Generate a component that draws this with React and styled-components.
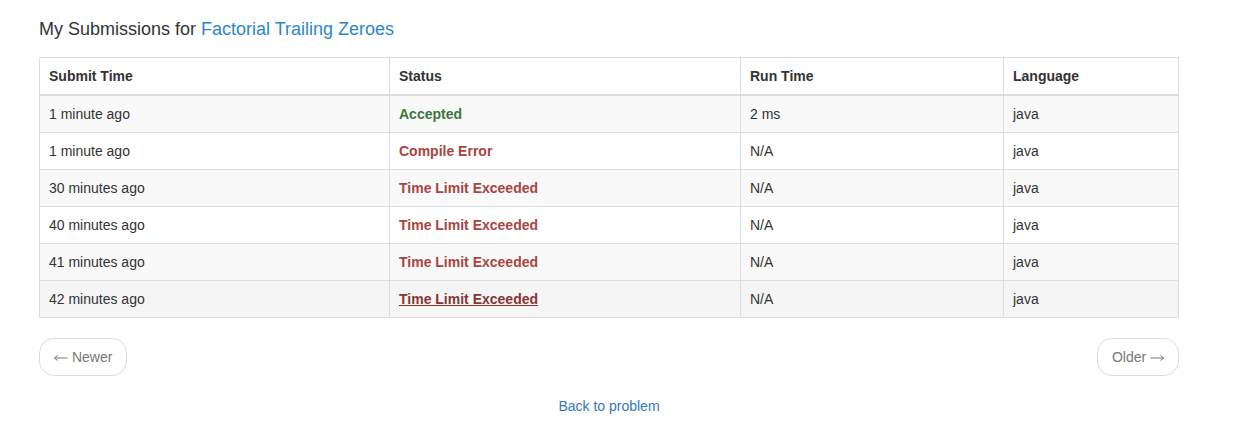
import styled, { createGlobalStyle } from "styled-components"

const GlobalStyle = createGlobalStyle`
  body {
    margin: 0;
    background: #fff;
    font-family: "Liberation Sans", Arial, sans-serif;
    font-size: 14px;
    line-height: 20px;
    color: #333;
  }
`

const rows = [
  { time: "1 minute ago", status: "Accepted", ok: true, run: "2 ms", lang: "java" },
  { time: "1 minute ago", status: "Compile Error", run: "N/A", lang: "java" },
  { time: "30 minutes ago", status: "Time Limit Exceeded", run: "N/A", lang: "java" },
  { time: "40 minutes ago", status: "Time Limit Exceeded", run: "N/A", lang: "java" },
  { time: "41 minutes ago", status: "Time Limit Exceeded", run: "N/A", lang: "java" },
  { time: "42 minutes ago", status: "Time Limit Exceeded", run: "N/A", lang: "java", hover: true },
]

const ArrowIcon = ({ flip }) => (
  <Arrow width="14" height="8" viewBox="0 0 14 8" $flip={flip}>
    <path d="M0.5 4H13.5M0.5 4L3.5 1.5M0.5 4L3.5 6.5" stroke="#777" strokeWidth="1" fill="none" />
  </Arrow>
)

const App = () => {
  return (
    <Page>
      <GlobalStyle />
      <Title>
        My Submissions for <TitleLink href="#">Factorial Trailing Zeroes</TitleLink>
      </Title>
      <Table>
        <colgroup>
          <col style={{ width: 350 }} />
          <col style={{ width: 351 }} />
          <col style={{ width: 263 }} />
          <col />
        </colgroup>
        <thead>
          <tr>
            <Th>Submit Time</Th>
            <Th>Status</Th>
            <Th>Run Time</Th>
            <Th>Language</Th>
          </tr>
        </thead>
        <tbody>
          {rows.map((r, i) => (
            <Row key={i} $odd={i % 2 === 0} $hover={r.hover}>
              <Td>{r.time}</Td>
              <Td>
                <Status href="#" $ok={r.ok} $hover={r.hover}>{r.status}</Status>
              </Td>
              <Td>{r.run}</Td>
              <Td>{r.lang}</Td>
            </Row>
          ))}
        </tbody>
      </Table>
      <Pager>
        <PagerButton href="#"><ArrowIcon /> Newer</PagerButton>
        <PagerButton href="#">Older <ArrowIcon flip /></PagerButton>
      </Pager>
      <Back>
        <BackLink href="#">Back to problem</BackLink>
      </Back>
    </Page>
  )
}

export default App

const Page = styled.div`
  width: 1140px;
  padding: 18px 0 0 39px;
`

const Title = styled.h3`
  margin: 0 0 17px;
  font-size: 18px;
  font-weight: 400;
  line-height: 22px;
  color: #333;
`

const TitleLink = styled.a`
  color: #2a87cc;
  text-decoration: none;
`

const Table = styled.table`
  width: 1140px;
  border-collapse: collapse;
  border-spacing: 0;
  border: 1px solid #ddd;
  table-layout: fixed;
`

const Th = styled.th`
  text-align: left;
  font-weight: 700;
  padding: 8px 9px;
  height: 20px;
  line-height: 20px;
  border: 1px solid #ddd;
  border-bottom: 2px solid #ddd;
  vertical-align: middle;
`

const Row = styled.tr`
  background: ${({ $hover, $odd }) => ($hover ? "#f5f5f5" : $odd ? "#f9f9f9" : "#fff")};
`

const Td = styled.td`
  padding: 8px 9px;
  line-height: 20px;
  border: 1px solid #ddd;
  vertical-align: middle;
`

const Status = styled.a`
  font-weight: 700;
  color: ${({ $ok, $hover }) => ($ok ? "#3c763d" : $hover ? "#843534" : "#a94442")};
  text-decoration: ${({ $hover }) => ($hover ? "underline" : "none")};
`

const Pager = styled.div`
  display: flex;
  justify-content: space-between;
  margin-top: 20px;
`

const PagerButton = styled.a`
  display: inline-block;
  padding: 8px 14px;
  line-height: 20px;
  border: 1px solid #ddd;
  border-radius: 15px;
  background: #fff;
  color: #777;
  text-decoration: none;
`

const Arrow = styled.svg`
  display: inline-block;
  vertical-align: middle;
  margin-top: -1px;
  transform: ${({ $flip }) => ($flip ? "scaleX(-1)" : "none")};
`

const Back = styled.div`
  text-align: center;
  margin-top: 20px;
`

const BackLink = styled.a`
  color: #337ab7;
  text-decoration: none;
`
